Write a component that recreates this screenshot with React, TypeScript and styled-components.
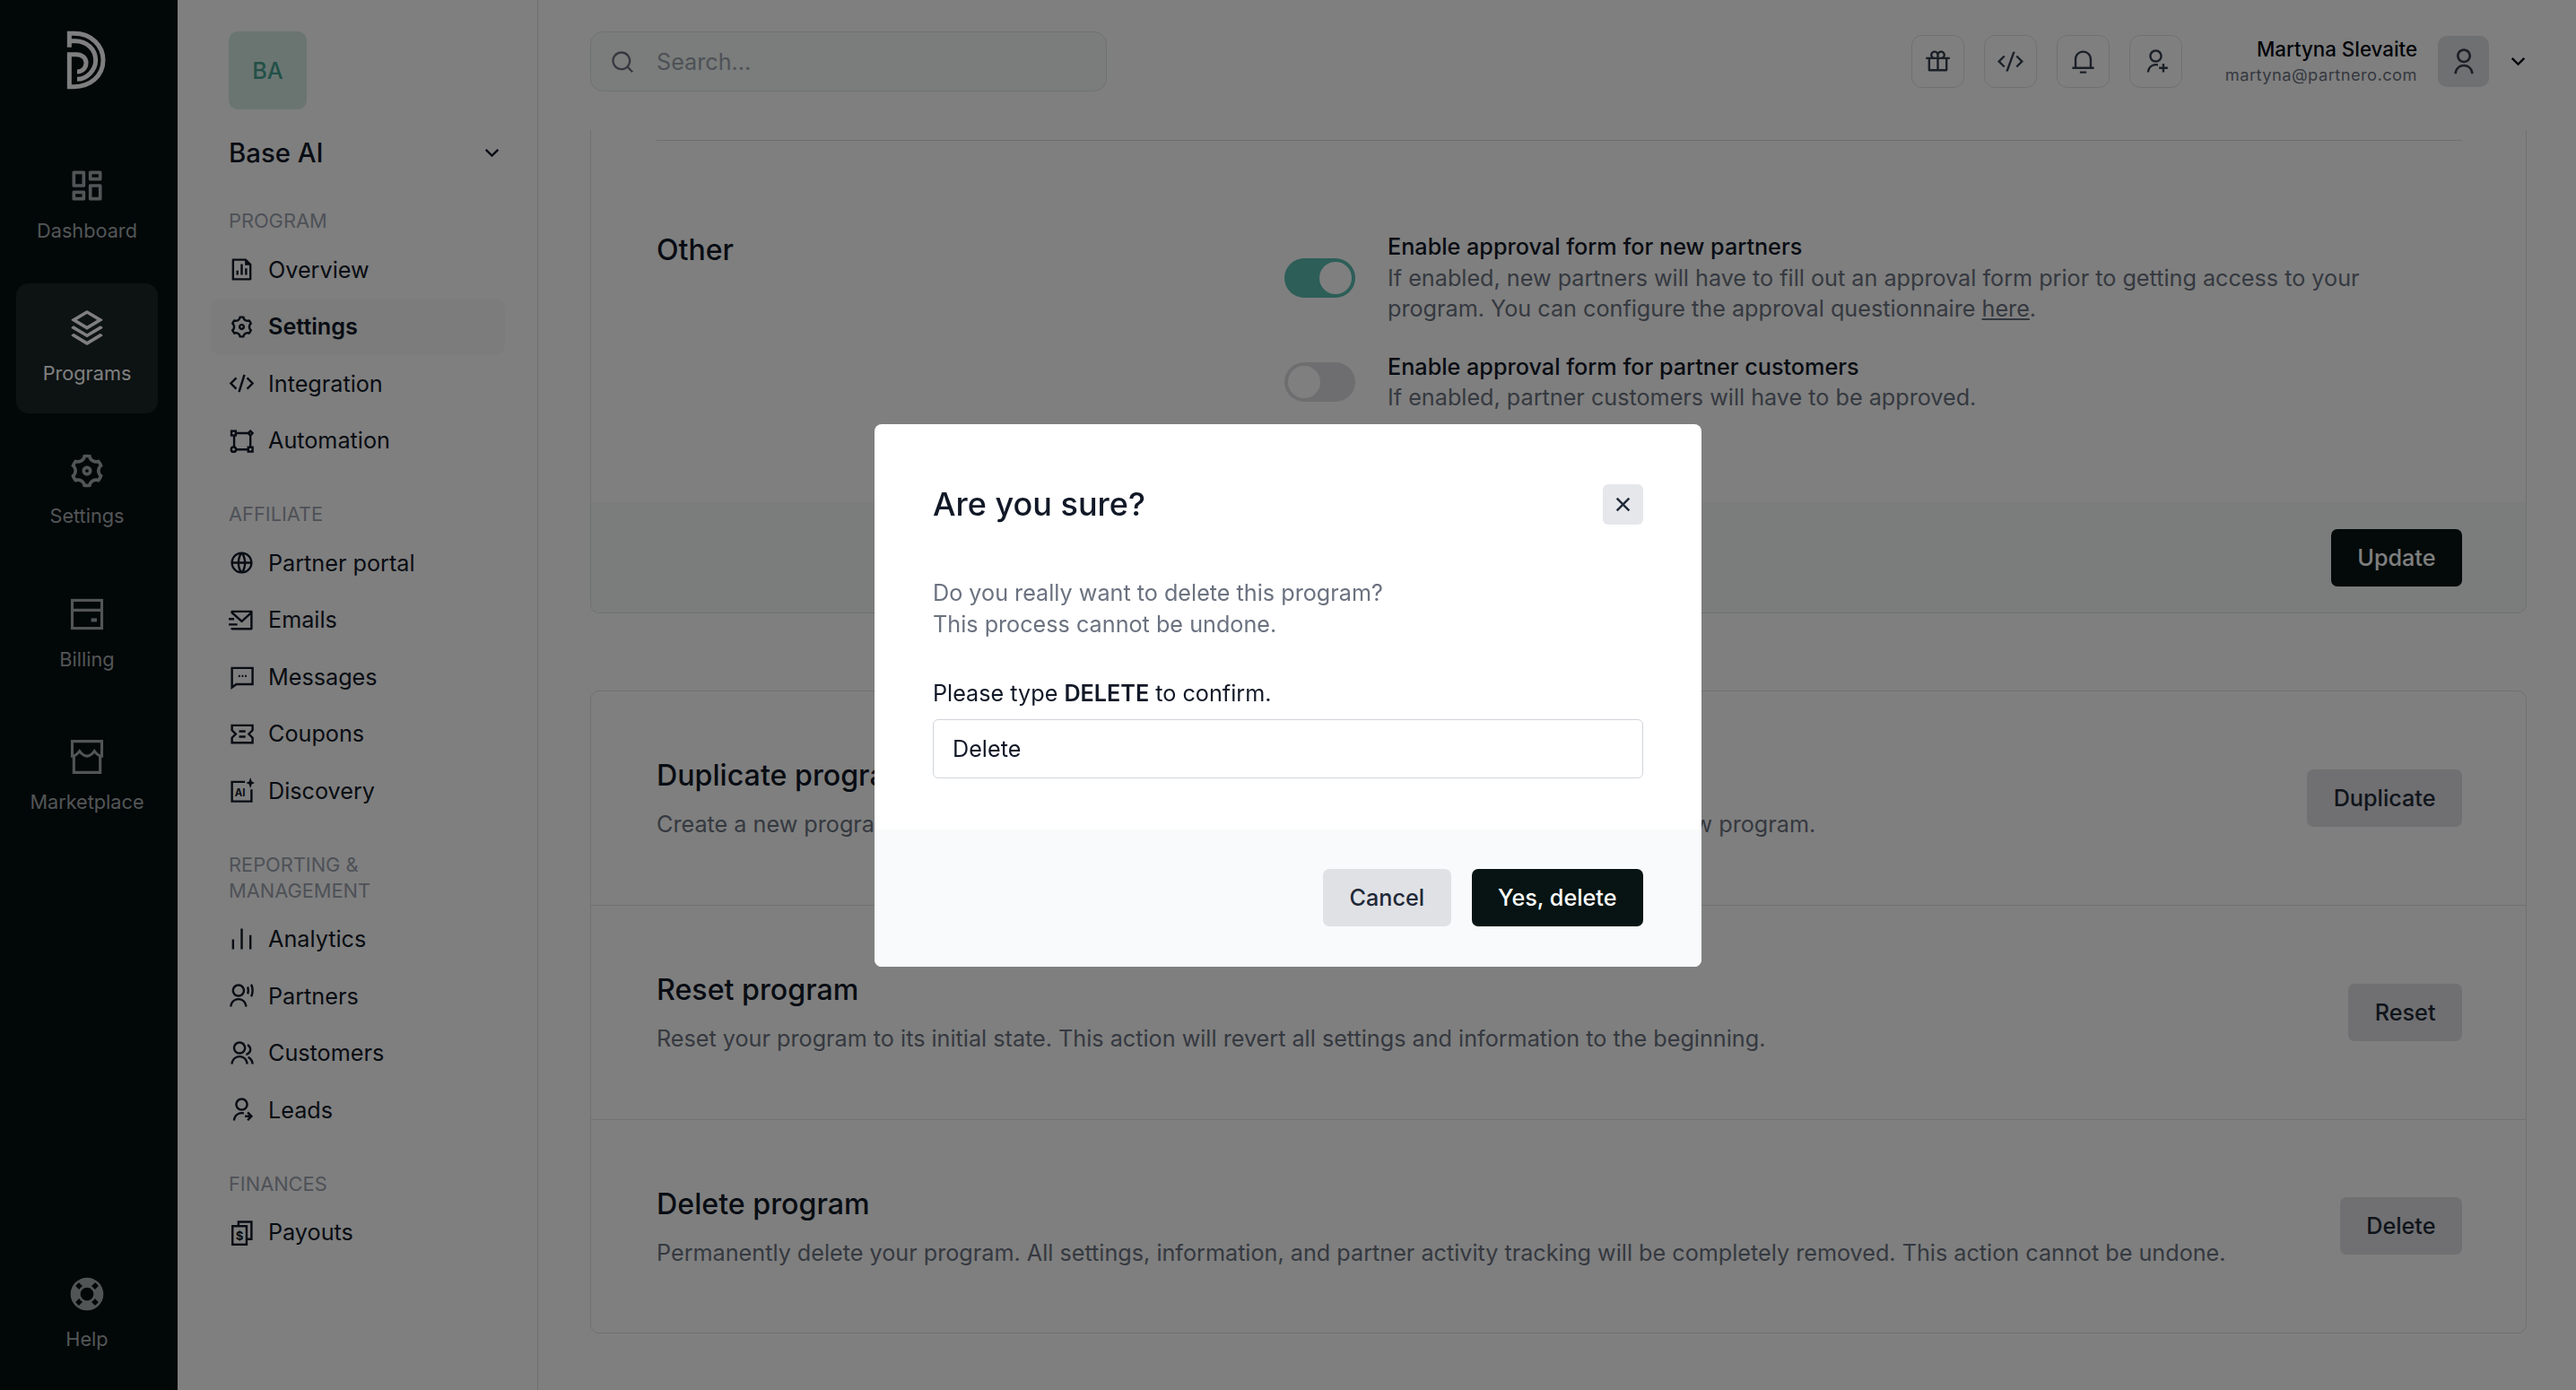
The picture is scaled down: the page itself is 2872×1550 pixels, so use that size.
import { ReactNode } from "react";
import styled, { createGlobalStyle } from "styled-components";
import {
    RiArrowDownSLine, RiBarChartLine, RiCloseLine, RiCodeSSlashLine,
    RiDashboardLine, RiFileChartLine, RiGiftLine, RiGlobalLine, RiGroupLine, RiLifebuoyFill, RiMailSendLine,
    RiNotification3Line, RiSearchLine, RiSettings3Line, RiStackLine,
    RiUserAddLine, RiUserLine, RiUserSharedLine, RiUserVoiceLine,
} from "react-icons/ri";

const GlobalStyle = createGlobalStyle`
    * { box-sizing: border-box; }
    html, body { margin: 0; height: 100%; background: #fff; }
    body { font-family: Inter, "Liberation Sans", sans-serif; color: #111827; overflow: hidden; }
`;

const Page = styled.div`
    display: flex;
    height: 1550px;
    overflow: hidden;
`;

/* rail */
const Rail = styled.nav`
    width: 198px;
    flex: none;
    background: #040e10;
    display: flex;
    flex-direction: column;
    padding: 35px 22px 12px 18px;
`;

const LogoWrap = styled.div`
    height: 122px;
    display: flex;
    justify-content: center;
    color: #fff;
    svg { width: 80px; height: 80px; margin-top: -5px; margin-left: 6px; }
`;

const RailList = styled.div`
    display: flex;
    flex-direction: column;
    gap: 14.2px;
`;

const RailItem = styled.a<{ $active?: boolean; $bottom?: boolean }>`
    height: 145px;
    border-radius: 14px;
    padding-top: 28px;
    display: flex;
    flex-direction: column;
    align-items: center;
    color: ${(p) => (p.$active ? "#ffffff" : "#a4abad")};
    background: ${(p) => (p.$active ? "#1a2526" : "transparent")};
    margin-top: ${(p) => (p.$bottom ? "auto" : "0")};
    font-size: 21.7px;
    line-height: 30px;
    svg { width: 44px; height: 44px; margin-bottom: 13px; }
`;

/* program nav */
const SubNav = styled.aside`
    width: 402px;
    flex: none;
    border-right: 1px solid #dcdfe2;
    padding: 35px 36px 0 57px;
`;

const ProgramBadge = styled.div`
    width: 87px;
    height: 87px;
    border-radius: 10px;
    background: #d4ebe2;
    color: #45a08f;
    font-size: 25.2px;
    font-weight: 500;
    display: flex;
    align-items: center;
    justify-content: center;
`;

const ProgramName = styled.div`
    margin: 28px 0 42px;
    height: 40px;
    display: flex;
    align-items: center;
    justify-content: space-between;
    font-size: 29.3px;
    font-weight: 500;
    svg { width: 29px; height: 29px; }
`;

const NavGroup = styled.div`
    & + & { margin-top: 36px; }
`;

const NavLabel = styled.div`
    color: #9ca3af;
    font-size: 21.8px;
    line-height: 29px;
    text-transform: uppercase;
    margin-bottom: 8px;
`;

const NavRow = styled.a<{ $active?: boolean }>`
    height: 63.5px;
    display: flex;
    align-items: center;
    gap: 15px;
    margin-left: -21px;
    padding-left: 21px;
    border-radius: 12px;
    font-size: 25.2px;
    font-weight: ${(p) => (p.$active ? 600 : 400)};
    background: ${(p) => (p.$active ? "#f6f8f7" : "transparent")};
    svg { width: 29px; height: 29px; flex: none; }
`;

/* main column */
const Main = styled.main`
    flex: 1;
    min-width: 0;
    display: flex;
    flex-direction: column;
`;

const TopBar = styled.header`
    height: 145px;
    flex: none;
    padding: 35px 50px 0 58px;
    display: flex;
    justify-content: space-between;
`;

const SearchBox = styled.div`
    width: 576px;
    height: 67px;
    border: 1px solid #dfe4e2;
    border-radius: 14px;
    background: #f4faf6;
    display: flex;
    align-items: center;
    gap: 24px;
    padding-left: 21px;
    color: #9ca3af;
    font-size: 25.2px;
    svg { width: 28px; height: 28px; color: #6b7280; }
`;

const TopRight = styled.div`
    height: 67px;
    display: flex;
    align-items: center;
`;

const IconButtons = styled.div`
    display: flex;
    gap: 22px;
`;

const IconButton = styled.button`
    width: 59px;
    height: 59px;
    padding: 0;
    background: none;
    border: 1px solid #dfe2e4;
    border-radius: 12px;
    color: #374151;
    display: flex;
    align-items: center;
    justify-content: center;
    svg { width: 29px; height: 29px; }
`;

const UserBlock = styled.div`
    margin-left: 46px;
    width: 216px;
    text-align: right;
`;

const UserName = styled.div`
    font-size: 22.3px;
    font-weight: 500;
    line-height: 29px;
    color: #030712;
`;

const UserMail = styled.div`
    font-size: 18.3px;
    line-height: 29px;
    letter-spacing: 0.45px;
    color: #6b7280;
`;

const Avatar = styled.div`
    width: 57px;
    height: 57px;
    margin-left: 23px;
    border-radius: 10px;
    background: #dfe0e4;
    color: #374151;
    display: flex;
    align-items: center;
    justify-content: center;
    svg { width: 32px; height: 32px; }
`;

const UserCaret = styled.div`
    margin-left: 18px;
    display: flex;
    color: #030712;
    svg { width: 29px; height: 29px; }
`;

const Scroller = styled.div`
    flex: 1;
    overflow: hidden;
    padding: 0 55px 0 58px;
`;

const Card = styled.section<{ $cut?: boolean }>`
    border: 1px solid #dfe2e4;
    border-top-width: ${(p) => (p.$cut ? "0" : "1px")};
    border-radius: ${(p) => (p.$cut ? "0 0 10px 10px" : "10px")};
    overflow: hidden;
`;

const OtherBody = styled.div`
    margin: 11px 71px 0 73px;
    padding: 101px 0 99px;
    border-top: 1px solid #dcdfe2;
    display: flex;
`;

const OtherTitle = styled.h2`
    width: 700px;
    flex: none;
    margin: 0;
    font-size: 32px;
    font-weight: 500;
    line-height: 42px;
`;

const ToggleList = styled.div`
    display: flex;
    flex-direction: column;
    gap: 30px;
`;

const ToggleRow = styled.div`
    display: flex;
    align-items: center;
    gap: 36px;
`;

const Toggle = styled.span<{ $on?: boolean }>`
    width: 79px;
    height: 44px;
    flex: none;
    border-radius: 22px;
    padding: 4px;
    display: flex;
    justify-content: ${(p) => (p.$on ? "flex-end" : "flex-start")};
    background: ${(p) => (p.$on ? "#5abdb0" : "#dcdde0")};
    &::after {
        content: "";
        width: 36px;
        height: 36px;
        border-radius: 50%;
        background: #fff;
    }
`;

const ToggleText = styled.div`
    width: 1170px;
    font-size: 25.2px;
    line-height: 34.5px;
    color: #6b7280;
    strong { display: block; font-weight: 500; color: #111827; }
    a { text-decoration: underline; }
`;

const CardFooter = styled.div`
    background: #f4faf6;
    padding: 30px 71px 29px;
    display: flex;
    justify-content: flex-end;
`;

const Button = styled.button<{ $primary?: boolean }>`
    height: 64px;
    padding: 0 29.5px;
    border: 0;
    border-radius: 7px;
    font-family: inherit;
    font-size: 25.2px;
    font-weight: 500;
    color: ${(p) => (p.$primary ? "#ffffff" : "#1f2937")};
    background: ${(p) => (p.$primary ? "#071413" : "#e0e1e5")};
`;

const ActionCard = styled(Card)`
    margin-top: 86px;
`;

const ActionRow = styled.div`
    height: 238.5px;
    padding: 0 71px 0 73px;
    display: flex;
    align-items: center;
    justify-content: space-between;
    & + & { border-top: 1px solid #dfe2e4; }
`;

const ActionCopy = styled.div`
    padding-top: 3px;
`;

const ActionTitle = styled.h3`
    margin: 0 0 17px;
    font-size: 32.2px;
    font-weight: 500;
    line-height: 40px;
`;

const ActionText = styled.p`
    margin: 0;
    font-size: 25.2px;
    line-height: 35px;
    color: #6b7280;
`;

/* dialog */
const Overlay = styled.div`
    position: fixed;
    inset: 0;
    background: rgba(0, 0, 0, 0.5);
    display: flex;
    align-items: center;
    justify-content: center;
`;

const Dialog = styled.div`
    width: 922px;
    border-radius: 8px;
    background: #fff;
    overflow: hidden;
`;

const DialogBody = styled.div`
    padding: 67px 65px 57px;
`;

const DialogHead = styled.div`
    display: flex;
    align-items: center;
    justify-content: space-between;
    margin-bottom: 59px;
`;

const DialogTitle = styled.h2`
    margin: 0;
    font-size: 36px;
    font-weight: 500;
`;

const CloseButton = styled.button`
    width: 45px;
    height: 45px;
    padding: 0;
    border: 0;
    border-radius: 6px;
    background: #e5e7eb;
    color: #1f2937;
    display: flex;
    align-items: center;
    justify-content: center;
    svg { width: 29px; height: 29px; }
`;

const DialogText = styled.p`
    margin: 0 0 40px;
    font-size: 25.2px;
    line-height: 35.5px;
    color: #6b7280;
`;

const ConfirmLabel = styled.label`
    display: block;
    margin-bottom: 11px;
    font-size: 25.2px;
    line-height: 36px;
    strong { font-weight: 600; }
`;

const ConfirmInput = styled.input`
    width: 100%;
    height: 66px;
    padding: 0 21px;
    border: 1px solid #d1d5db;
    border-radius: 6px;
    font-family: inherit;
    font-size: 25.2px;
    color: #111827;
    outline: none;
`;

const DialogFooter = styled.div`
    height: 153px;
    background: #f9fafb;
    padding-right: 65px;
    display: flex;
    align-items: center;
    justify-content: flex-end;
    gap: 23px;
`;

const Logo = () => (
    <svg viewBox="0 0 240 240" fill="none" stroke="currentColor" strokeWidth="15">
        <path d="M52 68 V22 H68 C125 22 165 62 165 112 C165 165 120 200 68 200 H52 V92 H75 C95 92 108 105 108 120 C108 138 95 150 78 150" />
        <path d="M52 47 H72 C110 47 140 75 140 112 C140 145 110 175 78 175" />
    </svg>
);

const BillingIcon = () => (
    <svg viewBox="0 0 24 24" fill="none" stroke="currentColor" strokeWidth="1.7">
        <rect x="3" y="3.5" width="18" height="17" />
        <path d="M3 9.5 H21" />
        <path d="M14.5 15.5 H18" strokeWidth="2.2" />
    </svg>
);

const StoreIcon = () => (
    <svg viewBox="0 0 24 24" fill="none" stroke="currentColor" strokeWidth="1.7">
        <path d="M3 2.5 H21 V11.5 C19.5 11.5 18 10.5 16.5 8.5 C15 10.5 13.5 11.5 12 11.5 C10.5 11.5 9 10.5 7.5 8.5 C6 10.5 4.5 11.5 3 11.5 Z" />
        <path d="M4 11.5 V21.5 H20 V11.5" />
    </svg>
);

const CodeIcon = () => (
    <svg viewBox="0 0 24 24" fill="none" stroke="currentColor" strokeWidth="2">
        <path d="M7 7 L2 12 L7 17 M17 7 L22 12 L17 17 M14.5 4 L9.5 20" />
    </svg>
);

const FlowIcon = () => (
    <svg viewBox="0 0 24 24" fill="none" stroke="currentColor" strokeWidth="2">
        <rect x="2.5" y="3" width="4" height="4" />
        <circle cx="4.5" cy="20" r="2.2" />
        <rect x="18" y="18" width="4" height="4" />
        <path d="M20 3 L22 5 L20 7 L18 5 Z" />
        <path d="M6.5 5 H18 M5 7 V18 M20 7 V18 M7 20 H18" />
    </svg>
);

const MessageIcon = () => (
    <svg viewBox="0 0 24 24" fill="none" stroke="currentColor" strokeWidth="2">
        <path d="M3 4 H22 V19 H7 L3 22 Z" />
        <path d="M9 11.5 H10.5 M12 11.5 H13.5 M15 11.5 H16.5" />
    </svg>
);

const CouponIcon = () => (
    <svg viewBox="0 0 24 24" fill="none" stroke="currentColor" strokeWidth="2">
        <path d="M3 4 H22 V8.5 L18.5 12 L22 15.5 V20 H3 V15.5 L6.5 12 L3 8.5 Z" />
        <path d="M9.5 9.5 H15.5 M9.5 14.5 H15.5" />
    </svg>
);

const DiscoveryIcon = () => (
    <svg viewBox="0 0 24 24" fill="none" stroke="currentColor" strokeWidth="2">
        <path d="M15 4 H3 V22 H21 V11" />
        <text x="5.5" y="17.5" fontSize="9.5" fontWeight="700" fontFamily="Inter, sans-serif" fill="currentColor" stroke="none">AI</text>
        <path d="M20 0 L21.3 3.7 L24 5 L21.3 6.3 L20 10 L18.7 6.3 L16 5 L18.7 3.7 Z" fill="currentColor" stroke="none" />
    </svg>
);

const PayoutIcon = () => (
    <svg viewBox="0 0 24 24" fill="none" stroke="currentColor" strokeWidth="2">
        <path d="M9 6 V2 H21 V18 H17" />
        <rect x="3.5" y="6" width="13" height="17" />
        <text x="10" y="19" fontSize="11" fontWeight="700" textAnchor="middle" fontFamily="Inter, sans-serif" fill="currentColor" stroke="none">$</text>
    </svg>
);

type NavEntry = { label: string; icon: ReactNode; active?: boolean };
type NavSection = { title: ReactNode; items: NavEntry[] };

const railItems = [
    { label: "Dashboard", icon: <RiDashboardLine /> },
    { label: "Programs", icon: <RiStackLine />, active: true },
    { label: "Settings", icon: <RiSettings3Line /> },
    { label: "Billing", icon: <BillingIcon /> },
    { label: "Marketplace", icon: <StoreIcon /> },
];

const sections: NavSection[] = [
    {
        title: "Program",
        items: [
            { label: "Overview", icon: <RiFileChartLine /> },
            { label: "Settings", icon: <RiSettings3Line />, active: true },
            { label: "Integration", icon: <CodeIcon /> },
            { label: "Automation", icon: <FlowIcon /> },
        ],
    },
    {
        title: "Affiliate",
        items: [
            { label: "Partner portal", icon: <RiGlobalLine /> },
            { label: "Emails", icon: <RiMailSendLine /> },
            { label: "Messages", icon: <MessageIcon /> },
            { label: "Coupons", icon: <CouponIcon /> },
            { label: "Discovery", icon: <DiscoveryIcon /> },
        ],
    },
    {
        title: <>Reporting &amp;<br />Management</>,
        items: [
            { label: "Analytics", icon: <RiBarChartLine /> },
            { label: "Partners", icon: <RiUserVoiceLine /> },
            { label: "Customers", icon: <RiGroupLine /> },
            { label: "Leads", icon: <RiUserSharedLine /> },
        ],
    },
    {
        title: "Finances",
        items: [{ label: "Payouts", icon: <PayoutIcon /> }],
    },
];

const actions = [
    {
        title: "Duplicate program",
        text: "Create a new program by copying all of the settings and information from this one into a brand new program.",
        button: "Duplicate",
    },
    {
        title: "Reset program",
        text: "Reset your program to its initial state. This action will revert all settings and information to the beginning.",
        button: "Reset",
    },
    {
        title: "Delete program",
        text: "Permanently delete your program. All settings, information, and partner activity tracking will be completely removed. This action cannot be undone.",
        button: "Delete",
    },
];

const App = () => {
    return (
        <>
            <GlobalStyle />
            <Page>
                <Rail>
                    <LogoWrap><Logo /></LogoWrap>
                    <RailList>
                        {railItems.map((item) => (
                            <RailItem key={item.label} $active={item.active}>
                                {item.icon}
                                {item.label}
                            </RailItem>
                        ))}
                    </RailList>
                    <RailItem $bottom><RiLifebuoyFill />Help</RailItem>
                </Rail>
                <SubNav>
                    <ProgramBadge>BA</ProgramBadge>
                    <ProgramName>Base AI<RiArrowDownSLine /></ProgramName>
                    {sections.map((section, i) => (
                        <NavGroup key={i}>
                            <NavLabel>{section.title}</NavLabel>
                            {section.items.map((item) => (
                                <NavRow key={item.label} $active={item.active}>
                                    {item.icon}
                                    {item.label}
                                </NavRow>
                            ))}
                        </NavGroup>
                    ))}
                </SubNav>
                <Main>
                    <TopBar>
                        <SearchBox><RiSearchLine />Search...</SearchBox>
                        <TopRight>
                            <IconButtons>
                                <IconButton><RiGiftLine /></IconButton>
                                <IconButton><RiCodeSSlashLine /></IconButton>
                                <IconButton><RiNotification3Line /></IconButton>
                                <IconButton><RiUserAddLine /></IconButton>
                            </IconButtons>
                            <UserBlock>
                                <UserName>Martyna Slevaite</UserName>
                                <UserMail>martyna@partnero.com</UserMail>
                            </UserBlock>
                            <Avatar><RiUserLine /></Avatar>
                            <UserCaret><RiArrowDownSLine /></UserCaret>
                        </TopRight>
                    </TopBar>
                    <Scroller>
                        <Card $cut>
                            <OtherBody>
                                <OtherTitle>Other</OtherTitle>
                                <ToggleList>
                                    <ToggleRow>
                                        <Toggle $on />
                                        <ToggleText>
                                            <strong>Enable approval form for new partners</strong>
                                            If enabled, new partners will have to fill out an approval form prior to getting access to your program. You can configure the approval questionnaire <a>here</a>.
                                        </ToggleText>
                                    </ToggleRow>
                                    <ToggleRow>
                                        <Toggle />
                                        <ToggleText>
                                            <strong>Enable approval form for partner customers</strong>
                                            If enabled, partner customers will have to be approved.
                                        </ToggleText>
                                    </ToggleRow>
                                </ToggleList>
                            </OtherBody>
                            <CardFooter><Button $primary>Update</Button></CardFooter>
                        </Card>
                        <ActionCard>
                            {actions.map((action) => (
                                <ActionRow key={action.title}>
                                    <ActionCopy>
                                        <ActionTitle>{action.title}</ActionTitle>
                                        <ActionText>{action.text}</ActionText>
                                    </ActionCopy>
                                    <Button>{action.button}</Button>
                                </ActionRow>
                            ))}
                        </ActionCard>
                    </Scroller>
                </Main>
            </Page>
            <Overlay>
                <Dialog>
                    <DialogBody>
                        <DialogHead>
                            <DialogTitle>Are you sure?</DialogTitle>
                            <CloseButton><RiCloseLine /></CloseButton>
                        </DialogHead>
                        <DialogText>Do you really want to delete this program?<br />This process cannot be undone.</DialogText>
                        <ConfirmLabel>Please type <strong>DELETE</strong> to confirm.</ConfirmLabel>
                        <ConfirmInput defaultValue="Delete" />
                    </DialogBody>
                    <DialogFooter>
                        <Button>Cancel</Button>
                        <Button $primary>Yes, delete</Button>
                    </DialogFooter>
                </Dialog>
            </Overlay>
        </>
    );
};

export default App;
